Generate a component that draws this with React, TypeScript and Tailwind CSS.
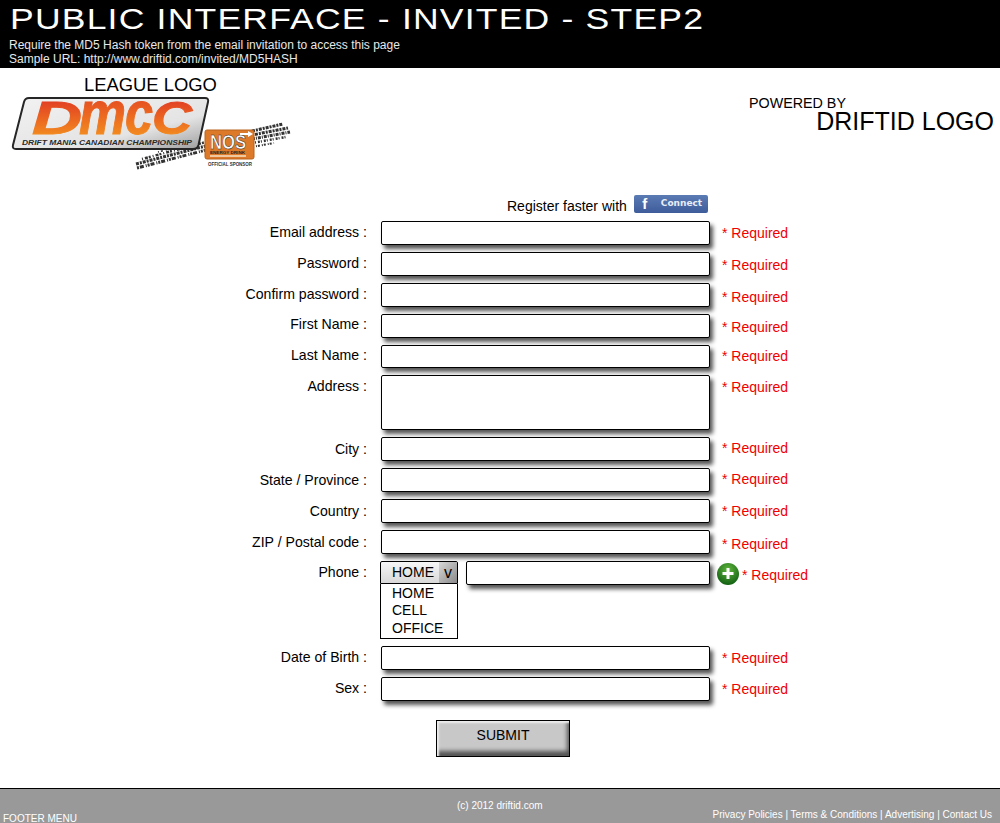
const font = "font-['Liberation_Sans',Arial,sans-serif]";

type Row = {
  label: string;
  box: string;
  labelPad: string;
  reqPad: string;
};

const topRows: Row[] = [
  { label: "Email address :", box: "h-[24px]", labelPad: "pt-[3px]", reqPad: "pt-[4px]" },
  { label: "Password :", box: "h-[24px]", labelPad: "pt-[3px]", reqPad: "pt-[5px]" },
  { label: "Confirm password :", box: "h-[24px]", labelPad: "pt-[3px]", reqPad: "pt-[6px]" },
  { label: "First Name :", box: "h-[24px]", labelPad: "pt-[2px]", reqPad: "pt-[5px]" },
  { label: "Last Name :", box: "h-[23px]", labelPad: "pt-[2px]", reqPad: "pt-[3px]" },
  { label: "Address :", box: "h-[55px]", labelPad: "pt-[3px]", reqPad: "pt-[4px]" },
  { label: "City :", box: "h-[24px]", labelPad: "pt-[4px]", reqPad: "pt-[3px]" },
  { label: "State / Province :", box: "h-[24px]", labelPad: "pt-[4px]", reqPad: "pt-[3px]" },
  { label: "Country :", box: "h-[24px]", labelPad: "pt-[4px]", reqPad: "pt-[4px]" },
  { label: "ZIP / Postal code :", box: "h-[24px]", labelPad: "pt-[4px]", reqPad: "pt-[6px]" },
];

const bottomRows: Row[] = [
  { label: "Date of Birth :", box: "h-[24px]", labelPad: "pt-[3px]", reqPad: "pt-[4px]" },
  { label: "Sex :", box: "h-[24px]", labelPad: "pt-[3px]", reqPad: "pt-[4px]" },
];

function Required({ className = "" }: { className?: string }) {
  return <div className={`text-[14px] leading-[16px] text-[#f00000] ${className}`}>* Required</div>;
}

function FieldRow({ row }: { row: Row }) {
  return (
    <div className="flex items-start">
      <div className={`w-[367px] text-right text-[14.100px] leading-[16px] text-black ${row.labelPad}`}>{row.label}</div>
      <div className={`ml-[14px] w-[329px] rounded-[2px] border border-black bg-white shadow-[3px_4px_4px_#555] ${row.box}`} />
      <Required className={`ml-[12px] ${row.reqPad}`} />
    </div>
  );
}

// big logo letters, each one squeezed to the width it has in the picture
const logoLetters = [
  { ch: "D", x: 32, w: 50, size: 46 },
  { ch: "m", x: 79, w: 47, size: 62 },
  { ch: "c", x: 125, w: 28, size: 62 },
  { ch: "C", x: 152, w: 40, size: 46 },
];

const tracks = [
  { d: "M137 166L206 148", w: 3, dash: "2 1 4 2 1 1" },
  { d: "M136 162L206 144", w: 3, dash: "3 1 2 1" },
  { d: "M142 157L206 140", w: 2.5, dash: "1 2 3 1 2 2" },
  { d: "M158 150L200 139", w: 1.5, dash: "1 2 2 3" },
  { d: "M252 129L283 122", w: 3, dash: "3 1 2 1" },
  { d: "M252 133L288 126", w: 3, dash: "2 1 3 1" },
  { d: "M252 137L290 130", w: 3, dash: "3 1 1 1" },
  { d: "M252 141L286 135", w: 2.5, dash: "2 1 1 2" },
  { d: "M252 145L274 141", w: 2, dash: "2 2 1 1" },
];

function LeagueLogo() {
  return (
    <svg width="292" height="76" viewBox="0 93 292 76" className="block">
      <defs>
        <linearGradient id="plate" x1="0" x2="1" y1="0" y2="1">
          <stop offset="0" stopColor="#f2f2f2" />
          <stop offset="0.65" stopColor="#e4e4e4" />
          <stop offset="1" stopColor="#9c9c9c" />
        </linearGradient>
        <linearGradient id="letters" x1="0" x2="0" y1="0" y2="1">
          <stop offset="0" stopColor="#dd2c26" />
          <stop offset="0.55" stopColor="#ec6a20" />
          <stop offset="1" stopColor="#f5a020" />
        </linearGradient>
      </defs>
      <g fill="none" stroke="#333">
        {tracks.map((t) => (
          <path key={t.d} d={t.d} strokeWidth={t.w} strokeDasharray={t.dash} />
        ))}
      </g>
      <path
        d="M29 96H205Q209 96 208 100L198.500 143Q197.500 147 193 147H16Q12 147 13 143L24 100Q25 96 29 96Z"
        fill="url(#plate)"
        stroke="#262626"
        strokeWidth="2"
      />
      {logoLetters.map((l) => (
        <text
          key={l.ch}
          x={l.x}
          y="132"
          fill="url(#letters)"
          stroke="url(#letters)"
          strokeWidth="1"
          fontFamily="Liberation Sans"
          fontWeight="700"
          fontStyle="italic"
          fontSize={l.size}
          textLength={l.w}
          lengthAdjust="spacingAndGlyphs"
        >
          {l.ch}
        </text>
      ))}
      <text
        x="22"
        y="143"
        fill="#2b2b2b"
        fontFamily="Liberation Sans"
        fontWeight="700"
        fontStyle="italic"
        fontSize="7.500"
        textLength="170"
        lengthAdjust="spacingAndGlyphs"
      >
        DRIFT MANIA CANADIAN CHAMPIONSHIP
      </text>
      <rect x="205" y="128" width="49" height="29" rx="2" fill="#dd7a2a" stroke="#b8621c" />
      <text
        x="210"
        y="147"
        fill="#fff"
        stroke="#222"
        strokeWidth="0.5"
        fontFamily="Liberation Sans"
        fontWeight="700"
        fontSize="20"
        textLength="36"
        lengthAdjust="spacingAndGlyphs"
      >
        NOS
      </text>
      <path d="M240 131H248V129L253 132L248 135V133H240Z" fill="#fff" />
      <text x="210" y="151.500" fill="#222" fontFamily="Liberation Sans" fontWeight="700" fontSize="3.800" textLength="35" lengthAdjust="spacingAndGlyphs">
        ENERGY DRINK
      </text>
      <rect x="210" y="153" width="36" height="2" fill="#f0c8a0" />
      <text x="208" y="164" fill="#333" fontFamily="Liberation Sans" fontWeight="700" fontSize="4.800" textLength="44" lengthAdjust="spacingAndGlyphs">
        OFFICIAL SPONSOR
      </text>
    </svg>
  );
}

function PlusIcon() {
  return (
    <svg width="22" height="22" viewBox="0 0 22 22" className="block">
      <defs>
        <radialGradient id="ball" cx="0.5" cy="0.3" r="0.75">
          <stop offset="0" stopColor="#5fb53c" />
          <stop offset="1" stopColor="#0c5a10" />
        </radialGradient>
      </defs>
      <circle cx="11" cy="11" r="11" fill="url(#ball)" />
      <path d="M11 5V16M5.500 10.500H16.500" stroke="#fff" strokeWidth="3" />
    </svg>
  );
}

export default function App() {
  return (
    <div className={`flex h-[823px] w-[1000px] flex-col overflow-hidden bg-white ${font}`}>
      <header className="h-[68px] bg-black pl-[10px] text-white">
        <h1 className="origin-left scale-x-[1.185] pt-[1px] text-[30px] leading-[36px] font-normal tracking-[1px] whitespace-nowrap">
          PUBLIC INTERFACE - INVITED - STEP2
        </h1>
        <div className="-ml-[1px] pt-[1px] text-[12px] leading-[14px] text-[#e8e8e8]">
          Require the MD5 Hash token from the email invitation to access this page
          <br />
          Sample URL: http://www.driftid.com/invited/MD5HASH
        </div>
      </header>

      <div className="flex h-[127px] items-start justify-between">
        <div>
          <div className="pt-[7px] pl-[84px] text-[18.400px] leading-[20px] text-black">LEAGUE LOGO</div>
          <LeagueLogo />
        </div>
        <div className="w-[251px] pt-[28px] pr-[6px] text-black">
          <div className="text-[14.300px] leading-[14px]">POWERED BY</div>
          <div className="-mt-[3px] text-right text-[25px] leading-[28px]">DRIFTID LOGO</div>
        </div>
      </div>

      <main className="flex-1">
        <div className="flex h-[26px] items-start pl-[507px]">
          <span className="pt-[3px] text-[14px] leading-[16px] text-black">Register faster with</span>
          <div className="ml-[7px] flex h-[18px] w-[74px] items-center rounded-[2px] bg-gradient-to-b from-[#5b7bb4] to-[#3e5c9a]">
            <span className="w-[22px] text-center text-[15px] leading-[18px] font-bold text-white">f</span>
            <span className="ml-[5px] font-['DejaVu_Sans',sans-serif] text-[9px] font-bold text-[#e8edf6]">Connect</span>
          </div>
        </div>

        <div className="flex flex-col gap-[7px]">
          {topRows.map((row) => (
            <FieldRow key={row.label} row={row} />
          ))}

          <div className="flex items-start">
            <div className="w-[367px] pt-[3px] text-right text-[14.100px] leading-[16px] text-black">Phone :</div>
            <div className="ml-[13px] w-[78px] text-[14px] text-black">
              <div className="flex h-[23px] rounded-t-[2px] border border-black bg-gradient-to-b from-[#f6f6f6] to-[#d8d8d8]">
                <span className="flex-1 pl-[11px] leading-[21px]">HOME</span>
                <span className="w-[18px] bg-gradient-to-br from-[#d8d8d8] to-[#8a8a8a] text-center text-[16px] leading-[21px]">v</span>
              </div>
              <div className="h-[55px] border border-t-0 border-black bg-white pt-[1px] pl-[11px]">
                <div className="h-[17px] leading-[17px]">HOME</div>
                <div className="h-[18px] leading-[17px]">CELL</div>
                <div className="h-[17px] leading-[17px]">OFFICE</div>
              </div>
            </div>
            <div className="ml-[8px] h-[24px] w-[244px] rounded-[2px] border border-black bg-white shadow-[3px_4px_4px_#555]" />
            <div className="ml-[7px] pt-[2px]">
              <PlusIcon />
            </div>
            <Required className="ml-[3px] pt-[6px]" />
          </div>

          {bottomRows.map((row) => (
            <FieldRow key={row.label} row={row} />
          ))}
        </div>

        <div className="mt-[19px] pl-[436px]">
          <button className="block h-[37px] w-[134px] border border-black bg-[#c8c8c8] pb-[7px] text-[14px] text-black shadow-[inset_2px_2px_2px_#eee,inset_-2px_-5px_4px_#555]">
            SUBMIT
          </button>
        </div>
      </main>

      <footer className="flex h-[35px] border-t border-black bg-[#999999] text-[10px] leading-[12px] text-white">
        <div className="w-[420px] pt-[24px] pl-[3px] whitespace-nowrap">FOOTER MENU</div>
        <div className="w-[170px] pt-[11px] pl-[37px] whitespace-nowrap">(c) 2012 driftid.com</div>
        <div className="flex-1 pt-[20px] pr-[8px] text-right whitespace-nowrap">
          Privacy Policies | Terms &amp; Conditions | Advertising | Contact Us
        </div>
      </footer>
    </div>
  );
}
